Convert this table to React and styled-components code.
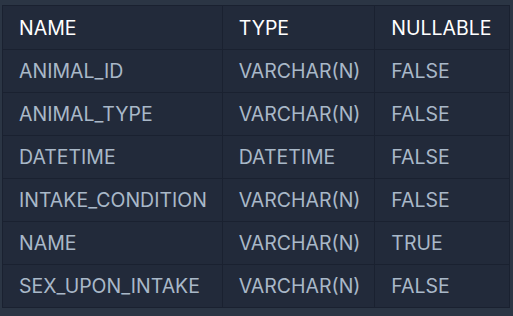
import React from 'react';
import styled, { createGlobalStyle } from 'styled-components';

const GlobalStyle = createGlobalStyle`
    html, body {
        margin: 0;
        padding: 0;
        background: #2b3544;
    }
`;

const Page = styled.div`
    width: 513px;
    height: 316px;
    padding: 5px 0 0 2px;
    box-sizing: border-box;
    background: #2b3544;
    font-family: Inter, 'Noto Sans', sans-serif;
`;

const Table = styled.table`
    width: 508px;
    border-collapse: collapse;
    background: #222a3a;
    border: 1px solid #1a2130;
`;

const Cell = styled.td`
    height: ${(props) => (props.head ? 43 : 42)}px;
    padding: 0 0 0 16px;
    border: 1px solid #1a2130;
    font-size: 19.5px;
    font-weight: 400;
    color: ${(props) => (props.head ? '#ffffff' : '#a9b8c8')};
    text-align: left;
    vertical-align: middle;
    white-space: nowrap;
`;

const columns = [
    { label: 'NAME', width: 220 },
    { label: 'TYPE', width: 153 },
    { label: 'NULLABLE', width: 135 },
];

const rows = [
    ['ANIMAL_ID', 'VARCHAR(N)', 'FALSE'],
    ['ANIMAL_TYPE', 'VARCHAR(N)', 'FALSE'],
    ['DATETIME', 'DATETIME', 'FALSE'],
    ['INTAKE_CONDITION', 'VARCHAR(N)', 'FALSE'],
    ['NAME', 'VARCHAR(N)', 'TRUE'],
    ['SEX_UPON_INTAKE', 'VARCHAR(N)', 'FALSE'],
];

const App = () => {
    return (
        <Page>
            <GlobalStyle />
            <Table>
                <colgroup>
                    {columns.map((col) => (
                        <col key={col.label} style={{ width: col.width }} />
                    ))}
                </colgroup>
                <thead>
                    <tr>
                        {columns.map((col) => (
                            <Cell as="th" head key={col.label}>
                                {col.label}
                            </Cell>
                        ))}
                    </tr>
                </thead>
                <tbody>
                    {rows.map((row, i) => (
                        <tr key={i}>
                            {row.map((value, j) => (
                                <Cell key={j}>{value}</Cell>
                            ))}
                        </tr>
                    ))}
                </tbody>
            </Table>
        </Page>
    );
};

export default App;
